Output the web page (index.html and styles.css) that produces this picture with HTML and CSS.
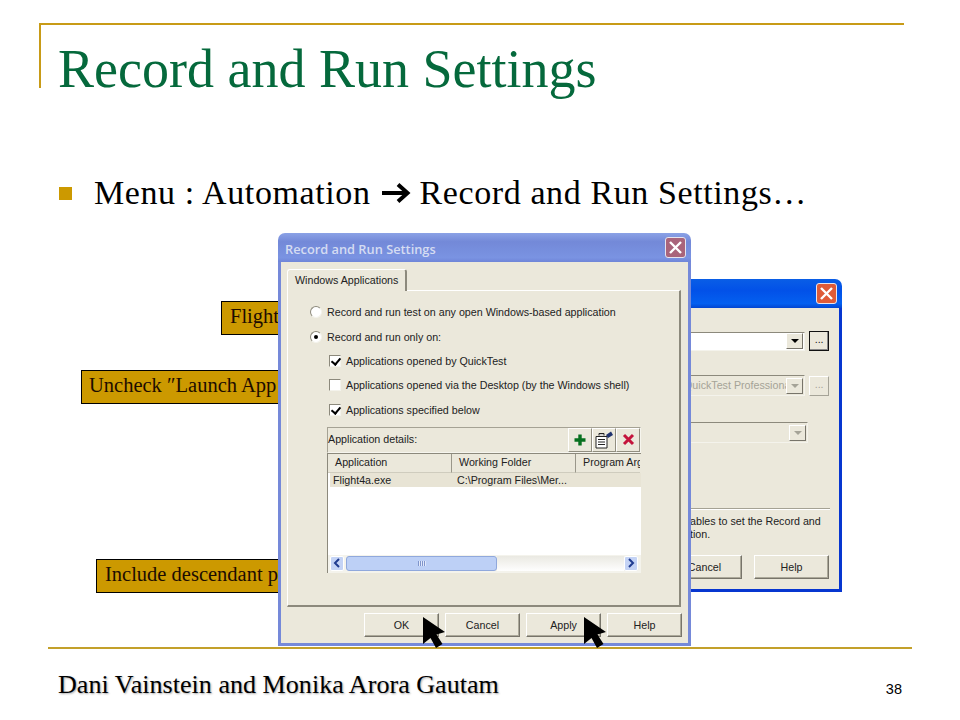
FILE: index.html
```html
<!DOCTYPE html>
<html lang="en">
<head>
<meta charset="utf-8">
<title>Record and Run Settings</title>
<link rel="stylesheet" href="styles.css">
</head>
<body>
<div class="slide">
  <header class="head"><h1 class="title">Record and Run Settings</h1></header>
  <div class="bullet">
    <span class="square"></span>
    <span>Menu : Automation</span>
    <svg class="arrow" width="30" height="22" viewBox="0 0 30 22"><path d="M1 11H26M17 2.5L26.5 11L17 19.5" fill="none" stroke="#000" stroke-width="4"/></svg>
    <span>Record and Run Settings…</span>
  </div>
  <footer class="foot">
    <div class="author">Dani Vainstein and Monika Arora Gautam</div>
    <div class="page">38</div>
  </footer>

  <div class="note note-a">Flight</div>
  <div class="note note-b">Uncheck ″Launch App</div>
  <div class="note note-c">Include descendant p</div>

  <section class="win back">
    <div class="bar bar-back"><span class="close close-back"><svg width="15" height="15" viewBox="0 0 15 15"><path d="M2 2L13 13M13 2L2 13" stroke="#fff" stroke-width="2.4"/></svg></span></div>
    <div class="back-body">
      <div class="combo-row row-1">
        <div class="combo"><span class="drop"><i class="tri"></i></span></div>
        <span class="dots focus">...</span>
      </div>
      <div class="combo-row row-2">
        <div class="combo off"><span class="combo-text">QuickTest Professional</span><span class="drop"><i class="tri"></i></span></div>
        <span class="dots dim">...</span>
      </div>
      <div class="combo-row row-3">
        <div class="combo off short"><span class="drop"><i class="tri"></i></span></div>
      </div>
      <div class="sep"></div>
      <p class="back-text">ables to set the Record and<br>tion.</p>
      <div class="buttons back-buttons"><span class="btn">Cancel</span><span class="btn">Help</span></div>
    </div>
  </section>

  <section class="win front">
    <div class="bar bar-front">
      <span class="bar-title">Record and Run Settings</span>
      <span class="close close-front"><svg width="15" height="15" viewBox="0 0 15 15"><path d="M2 2L13 13M13 2L2 13" stroke="#fff" stroke-width="2.4"/></svg></span>
    </div>
    <div class="front-body">
      <div class="tab">Windows Applications</div>
      <div class="panel">
        <div class="opt opt-radio"><span class="radio"></span>Record and run test on any open Windows-based application</div>
        <div class="opt opt-radio"><span class="radio on"></span>Record and run only on:</div>
        <div class="opt opt-check"><span class="check on"></span>Applications opened by QuickTest</div>
        <div class="opt opt-check"><span class="check"></span>Applications opened via the Desktop (by the Windows shell)</div>
        <div class="opt opt-check"><span class="check on"></span>Applications specified below</div>
        <div class="details">
          <div class="tools">
            <span class="tools-label">Application details:</span>
            <span class="tool"><svg width="14" height="14" viewBox="0 0 14 14"><path d="M7 1.5V12.5M1.5 7H12.5" stroke="#07701f" stroke-width="3.4"/></svg></span>
            <span class="tool"><svg width="20" height="19" viewBox="0 0 20 19"><path d="M2 6.5H13V18H2Z" fill="#fff" stroke="#222"/><path d="M5 5.5V3.5H10V5.5" fill="#ccc" stroke="#222"/><path d="M4 9.5H11M4 12H11M4 14.5H11" stroke="#222"/><path d="M12 5L17 1.5L19 5L14 8Z" fill="#20336e"/></svg></span>
            <span class="tool"><svg width="13" height="13" viewBox="0 0 13 13"><path d="M2 2L11 11M11 2L2 11" stroke="#c4143c" stroke-width="3"/></svg></span>
          </div>
          <div class="list">
            <div class="cols"><span class="col c1">Application</span><span class="col c2">Working Folder</span><span class="col c3">Program Arg</span></div>
            <div class="row"><span class="cell c1">Flight4a.exe</span><span class="cell c2">C:\Program Files\Mer...</span></div>
            <div class="blank"></div>
            <div class="scroll">
              <span class="sbtn"><svg width="8" height="10" viewBox="0 0 8 10"><path d="M6 1L2 5L6 9" fill="none" stroke="#203c90" stroke-width="2"/></svg></span>
              <span class="thumb"><i class="grip"></i></span>
              <span class="track"></span>
              <span class="sbtn"><svg width="8" height="10" viewBox="0 0 8 10"><path d="M2 1L6 5L2 9" fill="none" stroke="#203c90" stroke-width="2"/></svg></span>
            </div>
          </div>
        </div>
      </div>
      <div class="buttons front-buttons"><span class="btn">OK</span><span class="btn">Cancel</span><span class="btn">Apply</span><span class="btn">Help</span></div>
    </div>
  </section>

  <svg class="cursor cursor-a" width="23" height="32" viewBox="0 0 23 32"><path d="M0 0L22 15L13.500 17.500L19.500 27L13 31L7.500 21L0 27Z" fill="#000"/></svg>
  <svg class="cursor cursor-b" width="23" height="32" viewBox="0 0 23 32"><path d="M0 0L22 15L13.500 17.500L19.500 27L13 31L7.500 21L0 27Z" fill="#000"/></svg>
</div>
</body>
</html>
```
FILE: styles.css
```css
* { box-sizing: border-box; }
html, body { margin: 0; padding: 0; background: #fff; }
.slide {
  position: relative;
  width: 960px;
  height: 720px;
  overflow: hidden;
  display: flex;
  flex-direction: column;
  font-family: "Liberation Serif", serif;
  color: #000;
}
.head {
  margin: 23px 0 0 39px;
  width: 865px;
  height: 65px;
  padding-left: 17px;
  border-top: 2px solid #c89b17;
  border-left: 2px solid #c89b17;
}
.title {
  margin: 12px 0 0;
  font-size: 54px;
  line-height: 64px;
  font-weight: 400;
  color: #05693c;
  white-space: nowrap;
}
.bullet {
  margin: 85px 0 0 59px;
  display: flex;
  align-items: center;
  font-size: 34px;
  line-height: 40px;
  letter-spacing: 0.6px;
  white-space: nowrap;
}
.square { width: 13px; height: 13px; margin-right: 22px; background: #cc9900; }
.arrow { margin: 0 9px 0 10px; }
.foot {
  position: absolute;
  left: 48px;
  top: 647px;
  width: 864px;
  height: 60px;
  border-top: 2px solid #c3a02a;
  display: flex;
  justify-content: space-between;
  padding: 21px 10px 0;
}
.author {
  font-size: 26.100px;
  line-height: 30px;
  text-shadow: 1px 1px 2px #aaa;
  white-space: nowrap;
}
.page {
  font-family: "Liberation Sans", sans-serif;
  font-size: 14.500px;
  line-height: 38px;
}
.note {
  position: absolute;
  height: 34px;
  padding: 0 8px 0 7px;
  background: #cc9900;
  border: 1px solid #000;
  color: #1c0c00;
  font-size: 20.500px;
  line-height: 29px;
  white-space: nowrap;
}
.note-a { left: 221px; top: 301px; width: 70px; padding-left: 8px; }
.note-b { left: 81px; top: 370px; width: 210px; }
.note-c { left: 96px; top: 559px; width: 195px; padding-left: 8px; }

.win { position: absolute; font-family: "Liberation Sans", sans-serif; font-size: 10.700px; color: #222; }
.bar { display: flex; align-items: center; height: 29px; border-radius: 7px 7px 0 0; }
.close {
  display: flex;
  align-items: center;
  justify-content: center;
  width: 21px;
  height: 21px;
  margin-left: auto;
  border-radius: 3px;
  border: 1px solid #e6e4ee;
}
.front {
  left: 278px;
  top: 233px;
  width: 413px;
  height: 413px;
  display: flex;
  flex-direction: column;
}
.bar-front {
  padding: 0 5px 0 7px;
  background: linear-gradient(180deg, #8ba2e6 0%, #7389d8 30%, #7a93e2 85%, #6f85d8 100%);
  color: #d5dcf2;
}
.bar-title { margin-top: 2px; font-family: "Open Sans", sans-serif; font-weight: 600; font-size: 12.800px; }
.close-front { background: #a9647b; }
.front-body {
  flex: 1;
  display: flex;
  flex-direction: column;
  padding: 7px 6px 0;
  background: #ebe8db;
  border: solid #7589d9;
  border-width: 0 3px 3px;
}
.tab {
  position: relative;
  z-index: 1;
  align-self: flex-start;
  width: 120px;
  height: 22px;
  margin-bottom: -1px;
  padding: 4px 0 0 7px;
  background: #ebe8db;
  border: solid #fff;
  border-width: 1px 0 0 1px;
  border-right: 2px solid #8c897c;
  border-radius: 3px 3px 0 0;
  white-space: nowrap;
}
.panel {
  width: 394px;
  height: 317px;
  padding: 9px 0 0 22px;
  border: solid #fff;
  border-width: 1px 0 0 1px;
  border-right: 2px solid #8c897c;
  border-bottom: 2px solid #8c897c;
}
.opt { display: flex; align-items: center; height: 24.400px; white-space: nowrap; }
.opt-radio { padding-left: 0; }
.opt-check { padding-left: 19px; }
.radio {
  position: relative;
  width: 12px;
  height: 12px;
  margin-right: 5px;
  background: #fff;
  border-radius: 50%;
  border: 1px solid;
  border-color: #8c897c #f4f3ec #f4f3ec #8c897c;
}
.radio.on::after {
  content: "";
  position: absolute;
  left: 3px;
  top: 3px;
  width: 4px;
  height: 4px;
  background: #000;
  border-radius: 50%;
}
.check {
  position: relative;
  width: 12px;
  height: 12px;
  margin-right: 5px;
  background: #fff;
  border: 1px solid;
  border-color: #8c897c #f4f3ec #f4f3ec #8c897c;
}
.check.on::after {
  content: "";
  position: absolute;
  left: 3px;
  top: 0;
  width: 4px;
  height: 7px;
  border: solid #000;
  border-width: 0 2px 2px 0;
  transform: rotate(40deg);
}
.details { margin: 5px 0 0 17px; width: 314px; }
.tools {
  display: flex;
  align-items: center;
  height: 26px;
  border: 1px solid;
  border-color: #a5a294 #f6f5ee #f6f5ee #a5a294;
}
.tools-label { margin: 0 auto 2px 0; }
.tool {
  display: flex;
  align-items: center;
  justify-content: center;
  width: 24px;
  height: 24px;
  background: #ebe8db;
  border: 1px solid;
  border-color: #fff #918e80 #918e80 #fff;
}
.list {
  height: 120px;
  display: flex;
  flex-direction: column;
  background: #fff;
  border: solid #8c897c;
  border-width: 1px 0 0 1px;
  overflow: hidden;
}
.cols { display: flex; height: 19px; background: #ebe8db; flex: none; }
.col {
  flex: none;
  padding: 2px 0 0 7px;
  border-right: 1px solid #9a978a;
  border-bottom: 1px solid #cfccbe;
  white-space: nowrap;
  overflow: hidden;
}
.col.c1 { width: 124px; }
.col.c2 { width: 124px; }
.col.c3 { width: 64px; border-right: 0; }
.row {
  flex: none;
  display: flex;
  align-items: center;
  height: 14px;
  margin: 0 0 0 2px;
  background: #e8e4d5;
  white-space: nowrap;
}
.cell.c1 { width: 127px; padding-left: 3px; }
.cell.c2 { padding-left: 0; }
.blank { flex: 1; }
.scroll {
  flex: none;
  display: flex;
  align-items: center;
  height: 18px;
  padding: 0 3px 0 2px;
  border-bottom: 1px solid #f4f3ec;
  background: #f4f3ec;
}
.sbtn {
  flex: none;
  display: flex;
  align-items: center;
  justify-content: center;
  width: 14px;
  height: 15px;
  background: #c4d3f5;
  border: 1px solid #fff;
  border-radius: 2px;
}
.thumb {
  flex: none;
  display: flex;
  align-items: center;
  justify-content: center;
  width: 151px;
  height: 15px;
  margin-left: 2px;
  background: #bdd0f6;
  border: 1px solid #90a8dc;
  border-radius: 3px;
}
.grip { width: 8px; height: 5px; background: repeating-linear-gradient(90deg, #7f95cc 0 1px, #e2e9fa 1px 2px); }
.track { flex: 1; height: 15px; background: linear-gradient(180deg, #eae9e2, #fefefe); }
.buttons { display: flex; gap: 6px; }
.btn {
  display: flex;
  align-items: center;
  justify-content: center;
  width: 75px;
  height: 24px;
  background: #ebe8db;
  border: 1px solid;
  border-color: #fff #77746a #77746a #fff;
  box-shadow: inset -1px -1px 0 #aca99a;
}
.front-buttons { margin: 6px 0 0 77px; }

.back {
  left: 600px;
  top: 279px;
  width: 242px;
  height: 313px;
  display: flex;
  flex-direction: column;
}
.bar-back {
  padding: 0 5px 0 0;
  background: linear-gradient(180deg, #0a5ee6 0%, #0251e8 40%, #0460f0 85%, #0345d0 100%);
}
.close-back { background: #df5b38; }
.back-body {
  flex: 1;
  padding: 0 10px 0 0;
  background: #ebe8db;
  border: solid #0736d0;
  border-width: 0 3px 3px;
}
.combo-row { display: flex; align-items: center; gap: 4px; }
.row-1 { margin-top: 23px; }
.row-2 { margin-top: 24px; }
.row-3 { margin-top: 26px; }
.combo {
  position: relative;
  display: flex;
  align-items: center;
  justify-content: flex-end;
  width: 205px;
  height: 19px;
  padding-right: 1px;
  background: #fff;
  border: 1px solid;
  border-color: #8c897c #f4f3ec #f4f3ec #8c897c;
}
.combo.off { background: #ebe8db; height: 21px; color: #a5a397; }
.combo-text { position: absolute; left: 80px; top: 3px; white-space: nowrap; }
.drop {
  position: relative;
  display: flex;
  align-items: center;
  justify-content: center;
  width: 17px;
  height: 16px;
  background: #ebe8db;
  border: 1px solid;
  border-color: #fff #77746a #77746a #fff;
}
.tri { width: 0; height: 0; border: solid transparent; border-width: 4px 4px 0; border-top-color: #000; }
.off .tri { border-top-color: #a5a397; }
.dots {
  display: flex;
  align-items: center;
  justify-content: center;
  width: 20px;
  height: 20px;
  padding-bottom: 4px;
  background: #ebe8db;
  border: 1px solid;
}
.focus { border-color: #111; box-shadow: inset -1px -1px 0 #888; }
.dim { color: #a5a397; border-color: #fff #a5a397 #a5a397 #fff; }
.sep { margin: 65px -1px 0 0; height: 2px; border-top: 1px solid #a5a294; border-bottom: 1px solid #fff; }
.back-text { margin: 5px 0 0 87px; line-height: 13px; white-space: nowrap; }
.back-buttons { margin: 14px 0 0 64px; gap: 12px; }

.cursor { position: absolute; top: 617px; }
.cursor-a { left: 423px; }
.cursor-b { left: 584px; }
```
